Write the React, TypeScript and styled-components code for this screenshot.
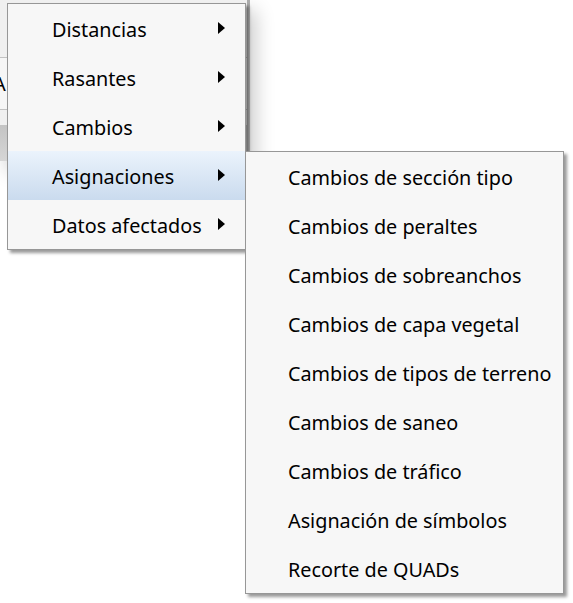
import React, { FC } from 'react';
import styled, { createGlobalStyle } from 'styled-components';

const GlobalStyle = createGlobalStyle`
  html, body {
    margin: 0;
    padding: 0;
    background: #ffffff;
  }
  body {
    font-family: 'Noto Sans', 'Open Sans', 'Liberation Sans', sans-serif;
  }
`;

const Screen = styled.div`
  position: relative;
  width: 573px;
  height: 603px;
  overflow: hidden;
  background: #ffffff;
`;

const BackWindow = styled.div`
  width: 247px;
  display: flex;
  flex-direction: column;
  border-right: 3px solid #ababab;
  box-shadow: 6px 10px 18px rgba(0, 0, 0, 0.2);
`;

const TitleArea = styled.div`
  height: 57px;
  background: #f0f0f0;
`;

const Field = styled.div`
  height: 51px;
  background: #f6f6f6;
  border-top: 1px solid #c2c2c2;
  border-bottom: 1px solid #c2c2c2;
  display: flex;
  align-items: center;
  overflow: hidden;
  font-size: 20px;
  color: #000;
  span {
    margin-left: -7px;
  }
`;

const Spacer = styled.div`
  height: 15px;
  background: #f0f0f0;
`;

const StatusStrip = styled.div`
  height: 36px;
  background: linear-gradient(#c4c4c4, #d6d6d6);
`;

const Menu = styled.ul<{ $left: number; $top: number; $width: number; $pad: number }>`
  position: absolute;
  left: ${(p) => p.$left}px;
  top: ${(p) => p.$top}px;
  width: ${(p) => p.$width}px;
  margin: 0;
  padding: 0;
  list-style: none;
  background: #f7f7f7;
  border: 1px solid #979797;
  box-shadow: 3px 3px 3px rgba(0, 0, 0, 0.4);
  box-sizing: border-box;
  --pad: ${(p) => p.$pad}px;
`;

const Item = styled.li<{ $active?: boolean }>`
  height: 49px;
  box-sizing: border-box;
  display: flex;
  align-items: center;
  justify-content: space-between;
  padding: 2px 20px 0 var(--pad);
  font-size: 19.8px;
  color: #000;
  white-space: nowrap;
  background: ${(p) => (p.$active ? 'linear-gradient(#ebf3fc, #cadbee)' : 'transparent')};
  svg {
    margin-top: -3px;
  }
`;

const Arrow: FC = () => (
  <svg width="7" height="12" viewBox="0 0 7 12">
    <polygon points="0,0 7,6 0,12" fill="#000" />
  </svg>
);

const mainItems = ['Distancias', 'Rasantes', 'Cambios', 'Asignaciones', 'Datos afectados'];

const subItems = [
  'Cambios de sección tipo',
  'Cambios de peraltes',
  'Cambios de sobreanchos',
  'Cambios de capa vegetal',
  'Cambios de tipos de terreno',
  'Cambios de saneo',
  'Cambios de tráfico',
  'Asignación de símbolos',
  'Recorte de QUADs',
];

const App: FC = () => {
  return (
    <Screen>
      <GlobalStyle />
      <BackWindow>
        <TitleArea />
        <Field>
          <span>A</span>
        </Field>
        <Spacer />
        <StatusStrip />
      </BackWindow>

      <Menu $left={7} $top={3} $width={239} $pad={44}>
        {mainItems.map((label) => (
          <Item key={label} $active={label === 'Asignaciones'}>
            <span>{label}</span>
            <Arrow />
          </Item>
        ))}
      </Menu>

      <Menu $left={245} $top={151} $width={319} $pad={42}>
        {subItems.map((label) => (
          <Item key={label}>
            <span>{label}</span>
          </Item>
        ))}
      </Menu>
    </Screen>
  );
};

export default App;
